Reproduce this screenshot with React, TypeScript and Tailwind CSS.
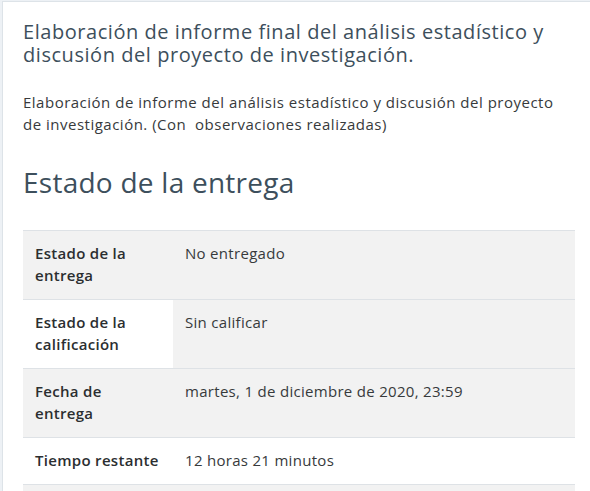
import React from "react";

const rows = [
  { th: "Estado de la entrega", td: "No entregado", thBg: "bg-[#f2f2f2]", tdBg: "bg-[#f2f2f2]" },
  { th: "Estado de la calificación", td: "Sin calificar", thBg: "bg-white", tdBg: "bg-[#f2f2f2]" },
  { th: "Fecha de entrega", td: "martes, 1 de diciembre de 2020, 23:59", thBg: "bg-[#f2f2f2]", tdBg: "bg-[#f2f2f2]" },
  { th: "Tiempo restante", td: "12 horas 21 minutos", thBg: "bg-white", tdBg: "bg-white" },
  { th: "", td: "", thBg: "bg-[#f2f2f2]", tdBg: "bg-[#f2f2f2]" },
];

export default function App() {
  return (
    <div
      className="w-[590px] h-[491px] overflow-hidden bg-[#edf1f5] pl-[2px] pt-px"
      style={{ fontFamily: "'Open Sans', 'Liberation Sans', sans-serif" }}
    >
      <div className="bg-white border-l border-t border-[#dde3e8] w-[620px] h-[600px] pl-5 pt-[18px]">
        <h3 className="text-[20px] leading-[23px] tracking-[0.55px] text-[#3d4f5c] w-[545px] font-normal">
          Elaboración de informe final del análisis estadístico y discusión del proyecto de investigación.
        </h3>
        <p className="mt-[25px] text-[15px] leading-[22px] tracking-[0.5px] text-[#373a3c] w-[552px]">
          Elaboración de informe del análisis estadístico y discusión del proyecto de investigación. (Con&nbsp; observaciones realizadas)
        </p>
        <h2 className="mt-[30px] text-[28px] leading-[34px] tracking-[0.25px] text-[#3d4f5c] font-normal">Estado de la entrega</h2>
        <table className="mt-[31px] w-[552px] border-collapse text-[15px] leading-[22px] tracking-[0.3px] text-[#373a3c]">
          <tbody>
            {rows.map((r, i) => (
              <tr key={i} className="border-t border-[#dee2e6]">
                <th className={`${r.thBg} w-[150px] pt-[11px] pb-[13px] px-3 text-left align-top font-semibold text-[#2b2e30]`}>{r.th || "\u00a0"}</th>
                <td className={`${r.tdBg} pt-[11px] pb-[13px] px-3 align-top`}>{r.td || "\u00a0"}</td>
              </tr>
            ))}
          </tbody>
        </table>
      </div>
    </div>
  );
}
